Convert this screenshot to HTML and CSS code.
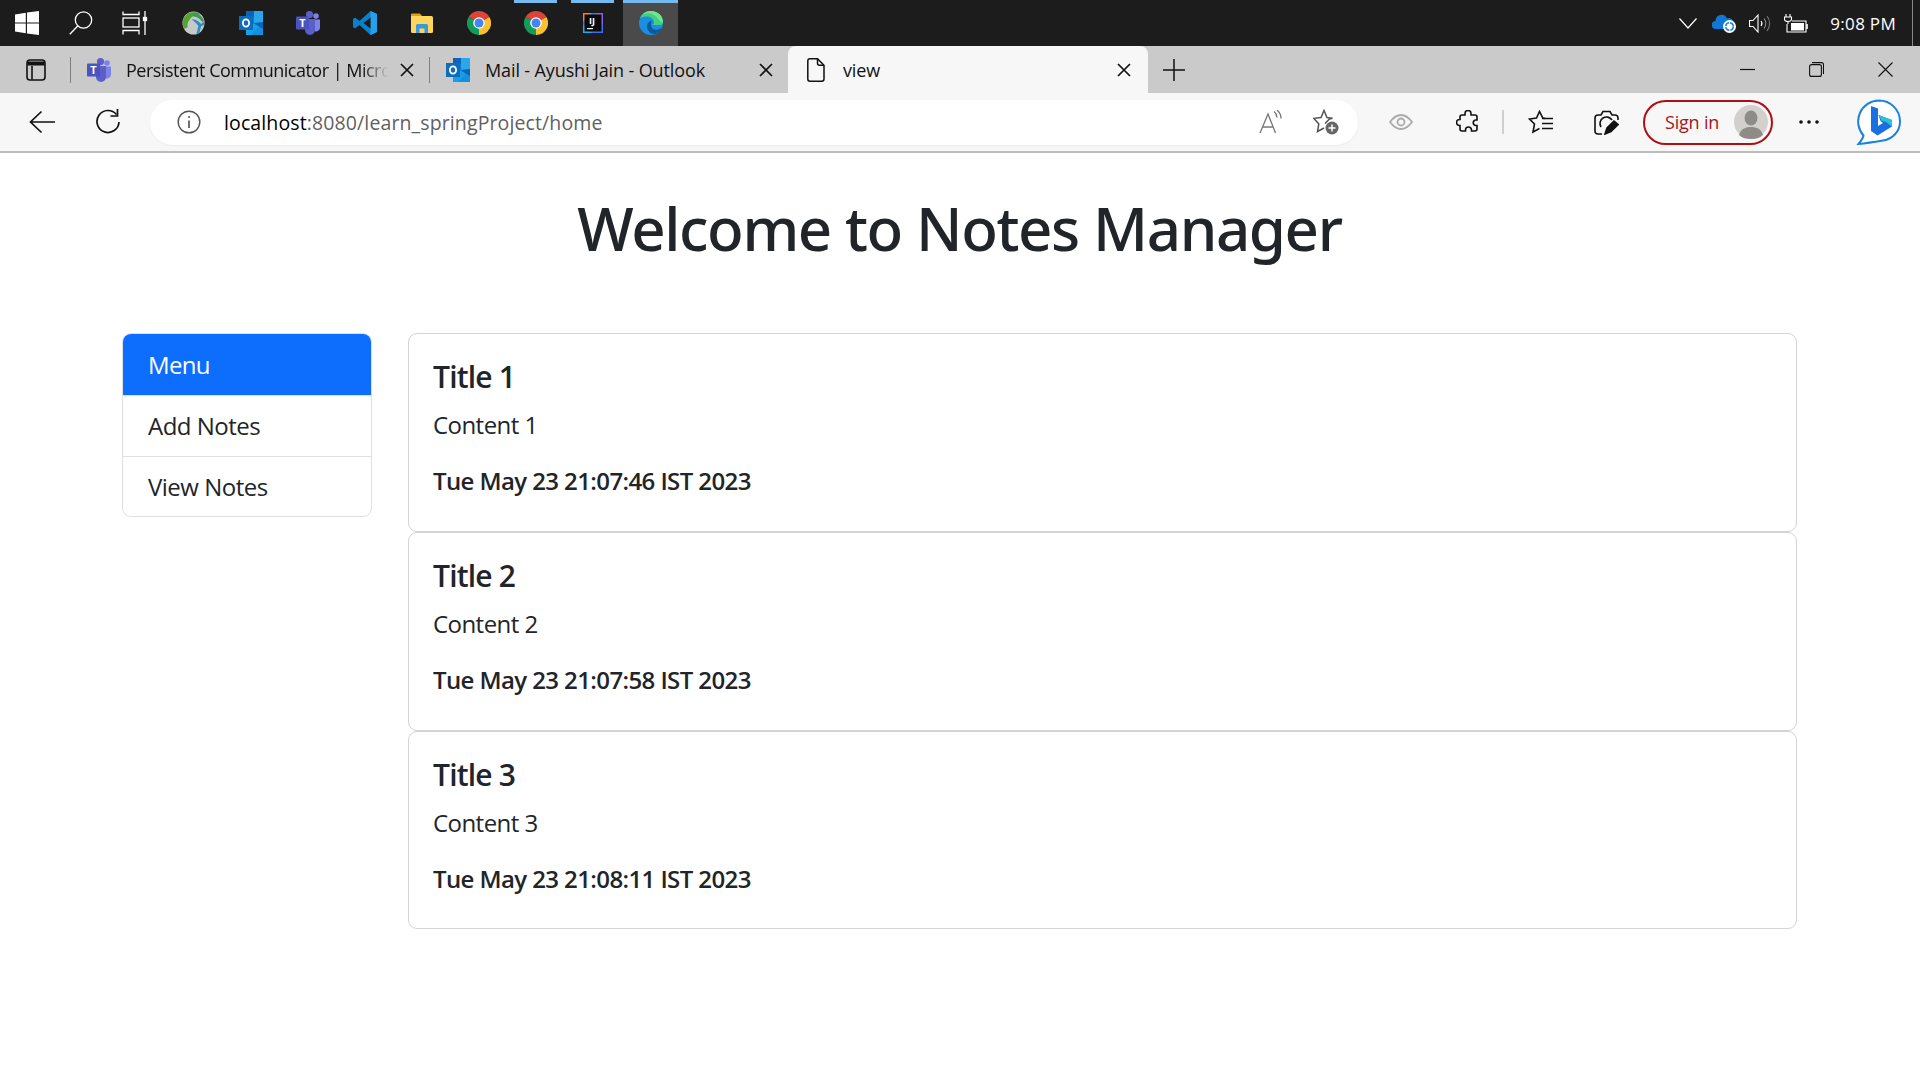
FILE: index.html
```html
<!DOCTYPE html>
<html lang="en">
<head>
<meta charset="utf-8">
<title>view</title>
<link rel="stylesheet" href="styles.css">
</head>
<body>
<svg class="defs" width="0" height="0" aria-hidden="true">
  <defs>
    <symbol id="i-outlook" viewBox="0 0 24 24">
      <rect x="7" y="0" width="17" height="6" fill="#0a64b8"/>
      <rect x="7" y="6" width="9" height="6" fill="#0f78d4"/>
      <rect x="15" y="0" width="9" height="12" fill="#28a8ea"/>
      <path d="M7 12h17v12H7z" fill="#14a0ea"/>
      <path d="M24 11v13H12z" fill="#1490df"/>
      <path d="M14 12 24 18V11z" fill="#0a64b8"/>
      <rect x="0" y="5" width="14" height="14" fill="#0f6cbd"/>
      <ellipse cx="7" cy="12" rx="3.1" ry="3.7" fill="none" stroke="#fff" stroke-width="1.8"/>
    </symbol>
    <symbol id="i-teams" viewBox="0 0 24 24">
      <circle cx="20" cy="5" r="2.8" fill="#7b83eb"/>
      <circle cx="13.5" cy="3.6" r="3.6" fill="#5b5fc7"/>
      <path d="M16 8.5h8v8a4 4 0 0 1-5.500 3.700z" fill="#7b83eb"/>
      <path d="M9 8h10v11a5 5 0 0 1-10 0z" fill="#5b5fc7"/>
      <rect x="0" y="5.500" width="13" height="13" rx="1" fill="#4b53bc"/>
      <text x="6.500" y="15.800" class="logo-letter" font-size="11">T</text>
    </symbol>
    <symbol id="i-chrome" viewBox="0 0 24 24">
      <path d="M12 12 1.600 6A12 12 0 0 1 22.400 6z" fill="#db4437"/>
      <path d="M12 12 1.600 6A12 12 0 0 0 12 24z" fill="#0f9d58"/>
      <path d="M12 12 22.400 6A12 12 0 0 1 12 24z" fill="#fbc02d"/>
      <circle cx="12" cy="12" r="5.800" fill="#fff"/>
      <circle cx="12" cy="12" r="4.500" fill="#4285f4"/>
    </symbol>
  </defs>
</svg>

<header class="taskbar">
  <div class="tb-system">
    <div class="tb-sys">
      <svg width="24" height="24" viewBox="0 0 24 24"><path d="M0 3.500 10.800 1.800V11.400H0zM12 1.600 24 0V11.400H12zM0 12.600H10.800V22.300L0 20.600zM12 12.600H24V24L12 22.400z" fill="#fff"/></svg>
    </div>
    <div class="tb-sys">
      <svg width="24" height="24" viewBox="0 0 24 24" fill="none" stroke="#fff" stroke-width="1.300"><circle cx="14.500" cy="9" r="8.200"/><path d="M8.700 15 .8 23.200"/></svg>
    </div>
    <div class="tb-sys">
      <svg width="26" height="24" viewBox="0 0 26 24" fill="none" stroke="#fff" stroke-width="1.300"><path d="M1 .5V3.500H17V.5M1 23.500V19.500H17V23.500"/><rect x="1" y="7" width="16" height="9"/><path d="M23 0V24"/><rect x="21.500" y="6.500" width="3" height="3" fill="#fff"/></svg>
    </div>
  </div>
  <div class="tb-apps">
    <div class="tb-app">
      <svg width="23" height="24" viewBox="0 0 24 24"><ellipse cx="12" cy="12" rx="11.500" ry="12" fill="#c3cbc9"/><path d="M1 10C2 4 7 .5 12 .5c2.500 0 5 .7 7 2.500C14 2.500 10 5 7.500 9c-2 3-2 5-1.500 7.500L2.500 18C.8 15.500.5 13 1 10z" fill="#58a32f"/><path d="M8 5.500c5-1.500 10 1 13 5.500l2-1c-1-4-4-7-8-8.500C12 1 9.500 3 8 5.500z" fill="#3f9a55"/><path d="M10 8c4 0 7.500 2 10 5l2.500 -2.500C23 12 23 13 23 14l-3 1.500-2 7.500c-1.500.5-2.500.8-3 .8L17 15C15 12 12.500 10 10 8z" fill="#2f8ec6"/></svg>
    </div>
    <div class="tb-app"><svg width="24" height="24"><use href="#i-outlook"/></svg></div>
    <div class="tb-app"><svg width="24" height="24"><use href="#i-teams"/></svg></div>
    <div class="tb-app">
      <svg width="24" height="24" viewBox="0 0 24 24"><path d="M17.500 0 24 3V21L17.500 24 6.500 14 2 17.500 0 16V8L2 6.500 6.500 10z" fill="#0a7fcb"/><path d="M17.500 0 24 3V21L17.500 24z" fill="#24a0ed"/><path d="M17.500 6.500V17.500L10.500 12z" fill="#1c1c1c"/></svg>
    </div>
    <div class="tb-app">
      <svg width="22" height="20" viewBox="0 0 22 20"><path d="M0 1.500A1 1 0 0 1 1 .5H9L11 3H0z" fill="#dca20f"/><path d="M0 3H20.500A1.500 1.500 0 0 1 22 4.500V18.500A1.500 1.500 0 0 1 20.500 20H1.500A1.500 1.500 0 0 1 0 18.500z" fill="#ffd65c"/><path d="M5 20V12.500A1.500 1.500 0 0 1 6.500 11H15.500A1.500 1.500 0 0 1 17 12.500V20H13.500V15.500H8.500V20z" fill="#3a9ad9"/></svg>
    </div>
    <div class="tb-app"><svg width="24" height="24"><use href="#i-chrome"/></svg></div>
    <div class="tb-app is-running"><svg width="24" height="24"><use href="#i-chrome"/></svg></div>
    <div class="tb-app is-running">
      <svg width="20" height="20" viewBox="0 0 20 20"><rect width="20" height="20" fill="#3f6ff0"/><path d="M0 0H9L0 9z" fill="#fd7b3b"/><path d="M20 0V12L12 0z" fill="#8e5de0"/><path d="M0 20 0 11 9 20z" fill="#1fa9f2"/><rect x="1.500" y="1.500" width="17" height="17" fill="#0a0a0a"/><text x="9" y="11" class="logo-letter" font-size="9">IJ</text><rect x="4" y="15" width="6" height="1.200" fill="#fff"/></svg>
    </div>
    <div class="tb-app is-active">
      <svg width="24" height="24" viewBox="0 0 24 24"><circle cx="12" cy="12" r="12" fill="#1a8fe0"/><path d="M1 7C3 2.500 7 0 12 0c7 0 12 5 12 11.500 0 1.500-1 2.500-3 2.500H13c1.500-.5 2-1.500 2-2.500C15 8 11.500 5.500 8 5.500 5.500 5.500 3 6 1 7z" fill="#43cf7e"/><path d="M13 9.500c-3 .5-5 3-5 6 0 4 3.500 8 8.500 7.500 3-1 5.500-3.500 6.500-6.500-2 2-6 3-9 1.500C12 16.500 11.500 12 13 9.500z" fill="#0c5a9c"/><path d="M24 11.500C24 5 19 0 12 0 9 0 6 1 4 3c1.500-.5 3-.7 4.500-.7 4 0 8 2 10 5 1.500 1.500 3 4 5.500 4.200z" fill="#6fe58f"/></svg>
    </div>
  </div>
  <div class="tray">
    <svg width="18" height="11" viewBox="0 0 18 11" fill="none" stroke="#fff" stroke-width="1.200"><path d="M.5.5 9 10 17.500.5"/></svg>
    <svg class="tray-cloud" width="24" height="20" viewBox="0 0 24 20"><path d="M4 16A4 4 0 0 1 3.500 8 6 6 0 0 1 15 5.500 5 5 0 0 1 20 14l-3 2z" fill="#0f78d4"/><circle cx="17.500" cy="13.500" r="6.500" fill="#fff"/><circle cx="17.500" cy="13.500" r="3.800" fill="none" stroke="#1a86d8" stroke-width="1.500" stroke-dasharray="5 1"/></svg>
    <svg class="tray-sound" width="22" height="19" viewBox="0 0 22 19" fill="none" stroke="#fff" stroke-width="1.100"><path d="M.5 6.500H4L9 1V18L4 12.500H.5z"/><path d="M12 7a4 4 0 0 1 0 5"/><path d="M15 4.500a8 8 0 0 1 0 10" stroke="#999"/><path d="M18 2a12 12 0 0 1 0 15" stroke="#777"/></svg>
    <svg class="tray-batt" width="24" height="20" viewBox="0 0 24 20" fill="none" stroke="#fff" stroke-width="1.100"><path d="M2 1V4M6 1V4M.5 4H7.500V6C7.500 8 6 8.500 4 8.500S.5 8 .5 6zM4 8.500V11"/><path d="M8 8H22V19H3V11"/><rect x="7" y="10" width="13" height="7.500" fill="#fff" stroke="none"/><path d="M23 11V16" stroke-width="1.600"/></svg>
    <span class="clock">9:08 PM</span>
  </div>
</header>

<nav class="tabstrip">
  <div class="tab-side">
    <svg width="20" height="22" viewBox="0 0 20 22" fill="none" stroke="#111" stroke-width="1.600"><rect x="1" y="1" width="18" height="20" rx="3"/><path d="M1.500 4.500h17" stroke-width="4"/><path d="M6 7V20.500"/></svg>
  </div>
  <div class="tab">
    <svg class="tab-icon" width="24" height="24"><use href="#i-teams"/></svg>
    <span class="tab-title is-fade">Persistent Communicator | Micro</span>
    <svg class="tab-close" width="14" height="14" viewBox="0 0 14 14" stroke="#111" stroke-width="1.700"><path d="M1 1 13 13M13 1 1 13"/></svg>
  </div>
  <div class="tab is-second">
    <svg class="tab-icon" width="24" height="24"><use href="#i-outlook"/></svg>
    <span class="tab-title">Mail - Ayushi Jain - Outlook</span>
    <svg class="tab-close" width="14" height="14" viewBox="0 0 14 14" stroke="#111" stroke-width="1.700"><path d="M1 1 13 13M13 1 1 13"/></svg>
  </div>
  <div class="tab is-current">
    <svg class="tab-icon" width="18" height="24" viewBox="0 0 18 24" fill="none" stroke="#111" stroke-width="1.500"><path d="M3 .8H10.500L17 7.300V21A2.200 2.200 0 0 1 14.800 23.200H3A2.200 2.200 0 0 1 .8 21V3A2.200 2.200 0 0 1 3 .8z"/><path d="M10.500 .8V5.300A2 2 0 0 0 12.500 7.300H17"/></svg>
    <span class="tab-title">view</span>
    <svg class="tab-close" width="14" height="14" viewBox="0 0 14 14" stroke="#111" stroke-width="1.700"><path d="M1 1 13 13M13 1 1 13"/></svg>
  </div>
  <div class="tab-new">
    <svg width="22" height="22" viewBox="0 0 22 22" stroke="#111" stroke-width="1.500"><path d="M11 0V22M0 11H22"/></svg>
  </div>
  <div class="win-ctrls">
    <svg width="15" height="15" viewBox="0 0 15 15" stroke="#111" stroke-width="1.200"><path d="M0 7.500H15"/></svg>
    <svg width="15" height="15" viewBox="0 0 15 15" fill="none" stroke="#111" stroke-width="1.100"><rect x=".6" y="2.600" width="11.800" height="11.800" rx="2"/><path d="M3 .6H12.500A2 2 0 0 1 14.500 2.600V12"/></svg>
    <svg width="15" height="15" viewBox="0 0 15 15" stroke="#111" stroke-width="1.100"><path d="M.5.500 14.500 14.500M14.500.5.500 14.500"/></svg>
  </div>
</nav>

<div class="toolbar">
  <div class="tool-nav">
    <svg width="26" height="24" viewBox="0 0 26 24" fill="none" stroke="#111" stroke-width="1.700"><path d="M26 12H2M12.500 1.500 1.500 12 12.500 22.500"/></svg>
    <svg width="26" height="26" viewBox="0 0 26 26" fill="none" stroke="#111" stroke-width="1.700"><path d="M21.500 5.500A11 11 0 1 0 24 13"/><path d="M22.500 0V7H15.500"/></svg>
  </div>
  <div class="addressbar">
    <svg class="addr-info" width="24" height="24" viewBox="0 0 24 24" fill="none" stroke="#555" stroke-width="1.400"><circle cx="12" cy="12" r="10.800"/><path d="M12 10.500V18" stroke-width="1.700"/><circle cx="12" cy="7" r="1" fill="#555" stroke="none"/></svg>
    <span class="url"><span class="url-host">localhost</span>:8080/learn_springProject/home</span>
    <svg class="addr-read" width="24" height="24" viewBox="0 0 24 24" fill="none" stroke="#777" stroke-width="1.300"><path d="M1 23 9 4 16.500 23M3.500 17H14.500"/><path d="M15 1.500a8 8 0 0 1 3 6M18 0a11 11 0 0 1 4 8.500"/></svg>
    <svg class="addr-fav" width="26" height="26" viewBox="0 0 26 26" fill="none" stroke="#555" stroke-width="1.500"><path d="M12 14.500 16.500 10 19.500 9.300 14 8.500 11 1.500 8 8.500.8 9.300 5.800 15 4.500 22.500 11 19"/><circle cx="19" cy="19" r="6.500" fill="#666" stroke="none"/><path d="M19 15.500V22.500M15.500 19H22.500" stroke="#fff"/></svg>
  </div>
  <div class="tool-actions">
    <svg class="act-eye" width="24" height="16" viewBox="0 0 24 16" fill="none" stroke="#aaa" stroke-width="1.800"><path d="M1 8C5 2.500 8.500 1 12 1s7 1.500 11 7c-4 5.500-7.500 7-11 7S5 13.500 1 8z"/><circle cx="12" cy="8" r="3.500"/></svg>
    <svg class="act-ext" width="24" height="24" viewBox="0 0 24 24" fill="none" stroke="#111" stroke-width="1.600"><path d="M9 3.500A3 3 0 0 1 15 3.500V5H19A2 2 0 0 1 21 7V10H19.500A2.800 2.800 0 0 0 19.500 15.500H21V19A2 2 0 0 1 19 21H15.500V20A3 3 0 0 0 9.500 20V21H6A2 2 0 0 1 4 19V15.500H3.500A3 3 0 0 1 3.500 9.500H4V7A2 2 0 0 1 6 5H9z"/></svg>
    <span class="act-divider"></span>
    <svg class="act-favs" width="25" height="24" viewBox="0 0 25 24" fill="none" stroke="#111" stroke-width="1.600"><path d="M17 8.500 14.800 8 11.500 1.500 8.500 8 1.500 9 6.500 14 5 22 11.500 18.500"/><path d="M14 8.500H25M14 13.500H25M14 18.500H25"/></svg>
    <svg class="act-coll" width="25" height="25" viewBox="0 0 25 25" fill="none" stroke="#111" stroke-width="1.600"><path d="M8 24H4A3 3 0 0 1 1 21V8A3 3 0 0 1 4 5H7L9 1.500H16L18 5H21A3 3 0 0 1 24 8V10"/><path d="M7 17A6.500 6.500 0 1 1 18 10"/><path d="M11 24 13 18 20 11 24 14.500 17 21.500z" fill="#111"/></svg>
    <div class="signin">
      <span class="signin-label">Sign in</span>
      <span class="avatar">
        <svg width="34" height="34" viewBox="0 0 34 34"><circle cx="17" cy="17" r="17" fill="#d2d0cc"/><ellipse cx="17" cy="13" rx="6.500" ry="7.500" fill="#8f8c88"/><path d="M5 30C7 24 11 22 17 22S27 24 29 30C26 33 21 34 17 34S8 33 5 30z" fill="#8f8c88"/></svg>
      </span>
    </div>
    <svg class="act-more" width="20" height="4" viewBox="0 0 20 4" fill="#111"><circle cx="2" cy="2" r="1.800"/><circle cx="10" cy="2" r="1.800"/><circle cx="18" cy="2" r="1.800"/></svg>
    <svg class="act-bing" width="46" height="46" viewBox="0 0 46 46"><path d="M23 1.500A21 21 0 0 1 44 22.500C44 32 37 40 27 41.500 21 42.500 12 44 2.500 45 5 42 7 39 7.500 36.500A21 21 0 0 1 23 1.500z" fill="#fff" stroke="#1b82e0" stroke-width="2"/><path d="M15 7 22 9.500V27L27 24 24.500 22 22.500 16 36 21V27.500L21.500 36.500 15 32z" fill="#1c6fe0"/><path d="M22.500 16 36 21V27.500L30 23 25.500 21.500z" fill="#27c3d8"/></svg>
  </div>
</div>

<main class="page">
  <h1 class="page-title">Welcome to Notes Manager</h1>
  <div class="content">
    <aside class="menu">
      <div class="menu-item is-active">Menu</div>
      <div class="menu-item">Add Notes</div>
      <div class="menu-item">View Notes</div>
    </aside>
    <section class="notes">
      <article class="note">
        <h5 class="note-title">Title 1</h5>
        <p class="note-text">Content 1</p>
        <h6 class="note-date">Tue May 23 21:07:46 IST 2023</h6>
      </article>
      <article class="note">
        <h5 class="note-title">Title 2</h5>
        <p class="note-text">Content 2</p>
        <h6 class="note-date">Tue May 23 21:07:58 IST 2023</h6>
      </article>
      <article class="note">
        <h5 class="note-title">Title 3</h5>
        <p class="note-text">Content 3</p>
        <h6 class="note-date">Tue May 23 21:08:11 IST 2023</h6>
      </article>
    </section>
  </div>
</main>
</body>
</html>
```
FILE: styles.css
```css
* { box-sizing: border-box; }
html, body { margin: 0; padding: 0; height: 100%; overflow: hidden; }
body { background: #fff; color: #212529; font-family: "Open Sans", "Noto Sans", sans-serif; }
svg { display: block; flex: none; }
.defs { position: absolute; }
.logo-letter { fill: #fff; font-family: "Open Sans", sans-serif; font-weight: 700; text-anchor: middle; }

/* Taskbar */
.taskbar { display: flex; align-items: center; height: 46px; background: #1c1c1c; position: relative; }
.tb-system { display: flex; }
.tb-sys { width: 54px; height: 46px; display: flex; align-items: center; justify-content: center; }
.tb-apps { display: flex; padding-left: 3px; }
.tb-app { width: 57px; height: 46px; display: flex; align-items: center; justify-content: center; position: relative; }
.tb-app.is-running::before { content: ""; position: absolute; top: 0; left: 7px; right: 7px; height: 3px; background: #76b9ed; }
.tb-app.is-active { width: 55px; background: #4a4a4a; margin-left: 2px; }
.tb-app.is-active::before { content: ""; position: absolute; top: 0; left: 0; right: 0; height: 3px; background: #76b9ed; }
.tray { margin-left: auto; display: flex; align-items: center; height: 46px; padding-right: 24px; position: relative; }
.tray::after { content: ""; position: absolute; right: 7px; top: 0; bottom: 0; width: 1px; background: #8a8a8a; }
.tray-cloud { margin-left: 15px; }
.tray-sound { margin-left: 13px; }
.tray-batt { margin-left: 13px; }
.clock { margin-left: 22px; color: #fff; font-size: 17px; letter-spacing: .3px; white-space: nowrap; }

/* Tab strip */
.tabstrip { display: flex; align-items: stretch; height: 47px; background: #cacaca; }
.tab-side { width: 71px; display: flex; align-items: center; padding-left: 26px; position: relative; }
.tab-side::after, .tab::after { content: ""; position: absolute; right: 0; top: 11px; height: 26px; width: 1px; background: #7e7e7e; }
.tab { position: relative; display: flex; align-items: center; width: 359px; padding: 0 16px; font-size: 18px; letter-spacing: -.12px; color: #111; }
.tab.is-second { width: 358px; }
.tab.is-second::after, .tab.is-current::after { display: none; }
.tab.is-current { width: 360px; background: #f7f7f7; border-radius: 8px 8px 0 0; padding: 0 17px 0 19px; }
.tab-icon { margin-right: 15px; }
.is-current .tab-icon { margin-right: 18px; }
.tab-title { flex: 1; white-space: nowrap; overflow: hidden; }
.tab-title.is-fade { letter-spacing: -.5px; -webkit-mask-image: linear-gradient(90deg, #000 90%, transparent); mask-image: linear-gradient(90deg, #000 90%, transparent); margin-right: 12px; }
.is-second .tab-close { margin-right: -1px; }
.tab-new { display: flex; align-items: center; margin-left: 15px; }
.win-ctrls { margin-left: auto; display: flex; align-items: center; gap: 54px; padding-right: 27px; }

/* Toolbar */
.toolbar { display: flex; align-items: center; height: 60px; background: #f7f7f7; border-bottom: 2px solid #bcbcbc; }
.tool-nav { display: flex; align-items: center; width: 150px; padding-left: 29px; gap: 40px; }
.addressbar { display: flex; align-items: center; width: 1208px; height: 45px; background: #fff; border-radius: 23px; box-shadow: 0 1px 2px rgba(0,0,0,.05); padding: 0 19px 0 27px; }
.addr-info { margin-right: 23px; }
.url { flex: 1; font-size: 19.500px; letter-spacing: .12px; color: #5f5f5f; white-space: nowrap; }
.url-host { color: #000; }
.addr-read { margin-right: 30px; }
.tool-actions { display: flex; align-items: center; flex: 1; }
.act-eye { margin-left: 31px; }
.act-ext { margin-left: 43px; }
.act-divider { width: 2px; height: 24px; background: #cfcfcf; margin-left: 22px; }
.act-favs { margin-left: 24px; }
.act-coll { margin-left: 41px; }
.signin { display: flex; align-items: center; justify-content: space-between; width: 130px; height: 45px; margin-left: 24px; padding: 0 3px 0 20px; border: 2px solid #b00e12; border-radius: 23px; color: #a4161a; font-size: 18px; letter-spacing: -.2px; }
.avatar { display: block; }
.act-more { margin-left: 26px; }
.act-bing { margin-left: 37px; }

/* Page */
.page { padding: 39px 123px 0 122px; }
.page-title { margin: 0 0 69px; height: 72px; font-family: "Noto Sans", "Open Sans", sans-serif; font-size: 60px; font-weight: 500; line-height: 72px; text-align: center; letter-spacing: -1.400px; white-space: nowrap; }
.content { display: flex; align-items: flex-start; gap: 36px; }
.menu { width: 250px; flex: none; background: #fff; border: 1px solid #dfe0e2; border-radius: 9px; overflow: hidden; }
.menu-item { height: 61px; padding: 12px 25px; font-size: 24px; line-height: 36px; letter-spacing: -.5px; border-top: 1px solid #dfe0e2; }
.menu-item:last-child { height: 60px; }
.menu-item:first-child { border-top: 0; height: 60px; }
.menu-item.is-active { background: #0d6efd; color: #fff; margin: -1px -1px 0; padding: 14px 26px 10px; height: 62px; letter-spacing: -.65px; }
.notes { flex: 1; display: flex; flex-direction: column; }
.note { height: 199px; padding: 25px 24px 0; border: 1px solid #d3d4d5; border-radius: 9px; }
.note:last-child { height: 197.500px; }
.note-title { margin: 0 0 12px; font-size: 30px; font-weight: 600; line-height: 36px; letter-spacing: -.8px; }
.note-text { margin: 0 0 23px; font-size: 24px; line-height: 36px; letter-spacing: -.55px; }
.note-date { margin: 0; font-size: 24px; font-weight: 600; line-height: 29px; letter-spacing: -.6px; }
```
